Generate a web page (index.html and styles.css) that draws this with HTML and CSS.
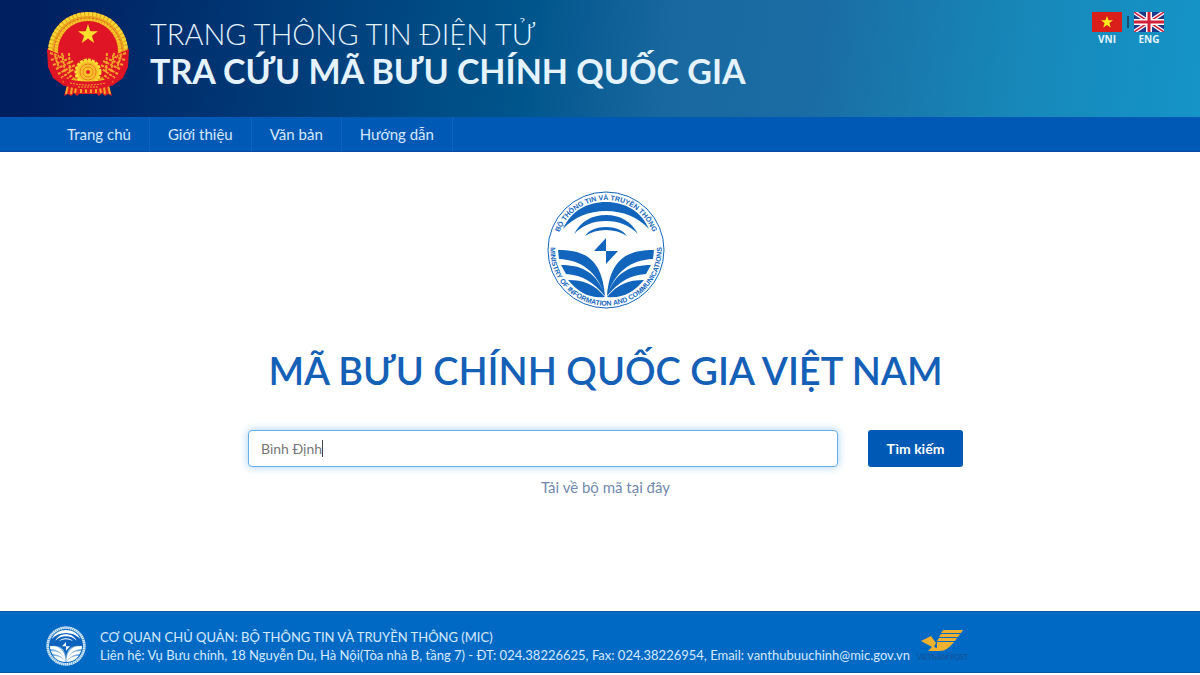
FILE: index.html
```html
<!DOCTYPE html>
<html lang="vi">
<head>
  <meta charset="UTF-8" />
  <meta name="viewport" content="width=device-width, initial-scale=1.0"/>
  <title>Mã bưu chính quốc gia Việt Nam</title>
  <link rel="stylesheet" href="styles.css">
</head>
<body>
  <!-- Header -->
  <header class="header">
    <svg class="emblem" viewBox="0 0 84 88" aria-hidden="true">
      <circle cx="42" cy="42" r="40" fill="#e8a11c"/>
      <circle cx="42" cy="42" r="38" fill="none" stroke="#f7d534" stroke-width="4" stroke-dasharray="3 1"/>
      <circle cx="42" cy="42" r="34" fill="none" stroke="#e4572a" stroke-width="1" stroke-dasharray="2 2"/>
      <circle cx="42" cy="42" r="32" fill="none" stroke="#f9c92b" stroke-width="3" stroke-dasharray="2 1"/>
      <circle cx="42" cy="41" r="30" fill="#df1525"/>
      <path d="M1 39l12 5 10 10 4 14-9 8-11-8-5-11z" fill="#df1525"/>
      <path d="M83 39l-12 5-10 10-4 14 9 8 11-8 5-11z" fill="#df1525"/>
      <path class="rice" d="M4 43l9 3M5 50l13-4M7 55l15-6M10 59l17-8M12 64l17-9M15 68l13-9M17 72l9-7M9 46l4 12M16 43l3 19M23 43l1 20"/>
      <path class="rice" d="M80 43l-9 3M79 50l-13-4M77 55l-15-6M74 59l-17-8M72 64l-17-9M69 68l-13-9M67 72l-9-7M75 46l-4 12M68 43l-3 19M61 43l-1 20"/>
      <path d="M42 14l2.400 7.200h7.600l-6.100 4.500 2.300 7.300-6.200-4.500-6.200 4.500 2.300-7.300-6.100-4.500h7.600z" fill="#ffdf2c"/>
      <circle cx="42" cy="62" r="12" fill="#fbc42b"/>
      <circle cx="42" cy="62" r="12" fill="none" stroke="#ffdd31" stroke-width="3" stroke-dasharray="3 1"/>
      <circle cx="42" cy="62" r="8" fill="none" stroke="#eb7b1f" stroke-width="1"/>
      <circle cx="42" cy="62" r="5" fill="none" stroke="#eb7b1f" stroke-width="1"/>
      <circle cx="42" cy="62" r="2" fill="#df1525"/>
      <path d="M22 73l-4 13 4-2 3 2 3-3 3 3 2-2h18l2 2 3-3 3 3 3-2 4 2-4-13z" fill="#e3201f"/>
      <path d="M22 75l-2 9M26 77l-1 7M30 78l-1 5M62 75l2 9M58 77l1 7M54 78l1 5M35 78v5M40 78v5M45 78v5M50 78v5" stroke="#f6a52a" stroke-width="2"/>
      <path d="M16 67q26 9 52 0l-3 9q-23 7-46 0z" fill="#df1525"/>
      <path d="M24 73q18 4 36 0M32 77h20" fill="none" stroke="#f5ae2d" stroke-width="1" stroke-dasharray="2 1"/>
    </svg>
    <div class="site-title">
      <div class="site-type">TRANG THÔNG TIN ĐIỆN TỬ</div>
      <div class="site-name">TRA CỨU MÃ BƯU CHÍNH QUỐC GIA</div>
    </div>
    <div class="languages">
      <a class="language" href="#">
        <svg class="flag" viewBox="0 0 30 20" aria-hidden="true">
          <rect width="30" height="20" fill="#da1f1a"/>
          <path d="M15 4l1.500 4.300h4.500l-3.600 2.800 1.300 4.400-3.700-2.600-3.700 2.600 1.300-4.400-3.600-2.800h4.500z" fill="#ffed1f"/>
        </svg>
        VNI
      </a>
      <span class="divider"></span>
      <a class="language" href="#">
        <svg class="flag" viewBox="0 0 30 20" aria-hidden="true">
          <rect width="30" height="20" fill="#20388c"/>
          <path d="M0 0l30 20M30 0L0 20" stroke="#fff" stroke-width="4"/>
          <path d="M0 0l30 20M30 0L0 20" stroke="#d3203a" stroke-width="1.500"/>
          <path d="M15 0v20M0 10h30" stroke="#fff" stroke-width="6"/>
          <path d="M15 0v20M0 10h30" stroke="#d3203a" stroke-width="3"/>
        </svg>
        ENG
      </a>
    </div>
  </header>

  <nav class="nav">
    <a href="#">Trang chủ</a>
    <a href="#">Giới thiệu</a>
    <a href="#">Văn bản</a>
    <a href="#">Hướng dẫn</a>
  </nav>

  <!-- Search -->
  <main class="main">
    <svg class="mic-logo" viewBox="0 0 120 120" role="img" aria-label="MIC">
      <defs>
        <path id="ringTop" d="M10 60a50 50 0 0 1 100 0"/>
        <path id="ringBottom" d="M8 40a55.700 55.700 0 1 0 104 0"/>
        <g id="micMark">
          <path d="M17 39C25 21 41 12 60 12s35 9 43 27C92 27 77 21 60 21S28 27 17 39z"/>
          <path d="M28 44c7-13 18-19 32-19s25 6 32 19c-9-9-19-13-32-13s-23 4-32 13z"/>
          <path d="M39 46c4-6 12-9 21-9s17 3 21 9c-6-4-13-6-21-6s-15 2-21 6z"/>
          <path d="M60 48v13H48zM60 61h12L60 74z"/>
          <path id="page" d="M12 60c26 0 44 8 47 46C51 82 36 70 13 69zM15 75c22 0 36 8 44 31C47 92 37 85 20 84zM22 90c16 0 26 4 37 17-15 2-27-5-37-17z"/>
          <use href="#page" transform="matrix(-1 0 0 1 120 0)"/>
        </g>
      </defs>
      <circle class="ring" cx="60" cy="60" r="58"/>
      <use href="#micMark"/>
      <text class="ring-text"><textPath href="#ringTop" startOffset="50%">BỘ THÔNG TIN VÀ TRUYỀN THÔNG</textPath></text>
      <text class="ring-text"><textPath href="#ringBottom" startOffset="50%">MINISTRY OF INFORMATION AND COMMUNICATIONS</textPath></text>
    </svg>

    <h1 class="title">MÃ BƯU CHÍNH QUỐC GIA VIỆT NAM</h1>

    <form class="search" onsubmit="return false">
      <div class="search-field">
        <input type="text" class="search-input" value="Bình Định" aria-label="Tìm kiếm">
        <span class="caret"></span>
      </div>
      <button type="submit" class="search-button">Tìm kiếm</button>
    </form>
    <a class="download" href="#">Tải về bộ mã tại đây</a>
  </main>

  <!-- Footer -->
  <footer class="footer">
    <svg class="footer-logo" viewBox="0 0 120 120" aria-hidden="true">
      <circle cx="60" cy="60" r="55" fill="none" stroke="#d5e8fa" stroke-width="8" stroke-dasharray="5 1"/>
      <circle cx="60" cy="60" r="49" fill="#0a62bd"/>
      <path d="M12 60q48-8 48 42q0-50 48-42a48 48 0 0 1-96 0z" fill="#7fb1e2"/>
      <use href="#micMark"/>
    </svg>
    <div class="contact">
      <div>CƠ QUAN CHỦ QUẢN: BỘ THÔNG TIN VÀ TRUYỀN THÔNG (MIC)</div>
      <div>Liên hệ: Vụ Bưu chính, 18 Nguyễn Du, Hà Nội(Tòa nhà B, tầng 7) - ĐT: 024.38226625, Fax: 024.38226954, Email: vanthubuuchinh@mic.gov.vn</div>
    </div>
    <div class="post">
      <svg class="post-logo" viewBox="0 0 42 22" aria-hidden="true">
        <path d="M22 0h20l-2 3H20zM20 4h19l-2 3H18zM18 8h18l-2 3H16zM16 12h17q-7 9-14 9H7l4-4-11-6 10-5 5 7-2 4 3 1z" fill="#f0b030"/>
      </svg>
      <span>VIETNAM POST</span>
    </div>
  </footer>
</body>
</html>
```
FILE: styles.css
```css
* {
  box-sizing: border-box;
}

body {
  margin: 0;
  min-height: calc(100vh - 2px);
  display: flex;
  flex-direction: column;
  background: #fff;
  font-family: Lato, 'Noto Sans', sans-serif;
  font-size: 15px;
}

a {
  color: inherit;
  text-decoration: none;
}

/* Header */
.header {
  display: flex;
  align-items: flex-start;
  padding: 10px 36px 19px 46px;
  background: linear-gradient(97deg, #001f60 3%, #003b78 24%, #00568c 44%, #1a68a0 56%, #1a6da4 68%, #1787b8 84%, #1594c8 100%);
  color: #e4f3ff;
}

.emblem {
  width: 84px;
  height: 88px;
}

.rice {
  fill: none;
  stroke: #f3a32a;
  stroke-width: 2;
  stroke-dasharray: 3 1;
}

.site-title {
  margin: 5px 0 0 20px;
}

.site-type {
  font-size: 29px;
  font-weight: 300;
  line-height: 38px;
}

.site-name {
  font-size: 34px;
  font-weight: bold;
  line-height: 36px;
}

.languages {
  display: flex;
  gap: 5px;
  margin: 2px 0 0 auto;
}

.language {
  display: flex;
  flex-direction: column;
  align-items: center;
  font-family: 'Open Sans', sans-serif;
  font-size: 10px;
  font-weight: bold;
  line-height: 14px;
}

.flag {
  width: 30px;
  height: 20px;
}

.divider {
  width: 2px;
  height: 12px;
  margin-top: 4px;
  background: #17506f;
}

/* Menu */
.nav {
  display: flex;
  padding-left: 49px;
  background: #0059b5;
  border-bottom: 1px solid #0a4ba3;
}

.nav a {
  padding: 0 18px;
  border-right: 1px solid #0b66c0;
  color: #d6e9ff;
  line-height: 34px;
}

/* Search */
.main {
  flex: 1;
  display: flex;
  flex-direction: column;
  align-items: center;
  padding: 38px 0 0 11px;
}

.mic-logo {
  width: 120px;
  height: 120px;
  fill: #1265bd;
}

.ring {
  fill: none;
  stroke: #1265bd;
  stroke-width: 1;
}

.ring-text {
  font-family: 'Liberation Sans', sans-serif;
  font-size: 7px;
  font-weight: bold;
  text-anchor: middle;
}

.title {
  margin: 34px 0 0;
  color: #1560b7;
  font-size: 38px;
  font-weight: 600;
  line-height: 52px;
}

.search {
  display: flex;
  gap: 30px;
  width: 100%;
  max-width: 715px;
  margin-top: 34px;
}

.search-field {
  flex: 1;
  position: relative;
}

.search-input {
  width: 100%;
  height: 37px;
  padding: 0 12px;
  border: 1px solid #66afe9;
  border-radius: 4px;
  box-shadow: 0 0 8px rgba(102, 175, 233, 0.6);
  color: #777;
  font: inherit;
  font-size: 14px;
  outline: none;
}

.caret {
  position: absolute;
  top: 10px;
  left: 74px;
  width: 1px;
  height: 17px;
  background: #444;
}

.search-button {
  width: 95px;
  height: 37px;
  padding: 0;
  border: 0;
  border-radius: 3px;
  background: #0059b5;
  color: #fff;
  font: inherit;
  font-size: 14px;
  font-weight: bold;
  cursor: pointer;
}

.download {
  margin-top: 10px;
  color: #7189b0;
  line-height: 20px;
}

/* Footer */
.footer {
  display: flex;
  align-items: center;
  padding: 14px 46px 6px;
  border-top: 1px solid #0a55ac;
  border-bottom: 1px solid #0a55ac;
  background: #0069c4;
  color: #d6eaff;
}

.footer-logo {
  width: 40px;
  height: 40px;
  margin-right: 14px;
  fill: #fff;
}

.contact {
  font-size: 13px;
  line-height: 18px;
}

.post {
  display: flex;
  flex-direction: column;
  align-items: center;
  margin-left: 7px;
  color: #1a4f91;
  font-size: 7px;
  line-height: 10px;
  white-space: nowrap;
}

.post-logo {
  width: 42px;
  height: 22px;
}
```
